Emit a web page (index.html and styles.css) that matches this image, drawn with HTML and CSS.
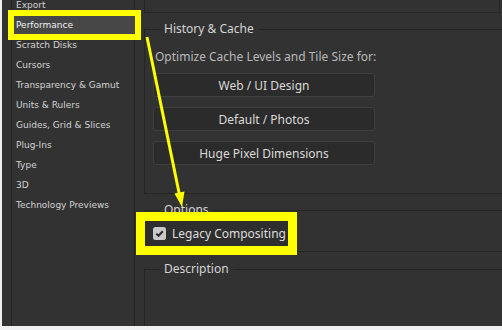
FILE: index.html
```html
<!DOCTYPE html>
<html lang="en">

<head>
    <meta charset="UTF-8">
    <meta name="viewport" content="width=device-width, initial-scale=1.0">
    <title>Preferences - Performance</title>
    <link rel="stylesheet" href="styles.css">
</head>

<body>
    <div class="window">
        <div class="sidebar">
            <ul class="nav">
                <li>Export</li>
                <li class="selected">Performance</li>
                <li>Scratch Disks</li>
                <li>Cursors</li>
                <li>Transparency &amp; Gamut</li>
                <li>Units &amp; Rulers</li>
                <li>Guides, Grid &amp; Slices</li>
                <li>Plug-Ins</li>
                <li>Type</li>
                <li>3D</li>
                <li>Technology Previews</li>
            </ul>
        </div>

        <div class="main">
            <div class="top-box"></div>

            <fieldset class="group group-cache">
                <legend>History &amp; Cache</legend>
                <p class="hint">Optimize Cache Levels and Tile Size for:</p>
                <button class="preset">Web / UI Design</button>
                <button class="preset">Default / Photos</button>
                <button class="preset">Huge Pixel Dimensions</button>
            </fieldset>

            <fieldset class="group group-options">
                <legend>Options</legend>
                <label class="check-row">
                    <span class="checkbox">
                        <svg width="13" height="13" viewBox="0 0 13 13">
                            <rect x="0" y="0" width="13" height="13" rx="2.5" fill="#c9c9c9" />
                            <path d="M3.3 6.6 L5.5 8.8 L9.8 4.2" fill="none" stroke="#2a2a2a" stroke-width="2" />
                        </svg>
                    </span>
                    Legacy Compositing
                </label>
            </fieldset>

            <fieldset class="group group-desc">
                <legend>Description</legend>
            </fieldset>
        </div>
    </div>

    <!-- annotation arrow -->
    <svg class="arrow" width="502" height="330" viewBox="0 0 502 330">
        <line x1="147" y1="37" x2="179.5" y2="195" stroke="#ffff00" stroke-width="3" />
        <polygon points="182,207 174.5,193.5 184.5,191.5" fill="#ffff00" />
    </svg>
</body>

</html>
```

FILE: styles.css
```css
body {
    margin: 0;
    background-color: #eef0f2;
    overflow: hidden;
    font-family: "Noto Sans", "Liberation Sans", sans-serif;
}

.window {
    margin-left: 2px;
    height: 326px;
    background-color: #323232;
    display: flex;
    overflow: hidden;
}

/* left list */
.sidebar {
    width: 133px;
    flex: none;
    box-sizing: border-box;
    padding-left: 9px;
    border-right: 1px solid #252525;
}

.nav {
    list-style: none;
    margin: -5px 0 0;
    padding: 0;
    height: calc(100% + 5px);
    border-left: 1px solid #252525;
    font-family: "DejaVu Sans", sans-serif;
    font-size: 9px;
    color: #d2d2d2;
}

.nav li {
    height: 20px;
    line-height: 20px;
    padding-left: 3px;
    margin-left: 1px;
    white-space: nowrap;
}

.nav li.selected {
    background-color: #474747;
    color: #f0f0f0;
    margin-right: -2px;
    outline: 6px solid #ffff00;
    outline-offset: -1px;
}

/* right panel */
.main {
    flex: 1;
    padding-left: 9px;
    min-width: 0;
}

.top-box {
    width: 356px;
    height: 13px;
    box-sizing: border-box;
    border: 1px solid #252525;
    border-top: none;
}

.group {
    border: 1px solid #252525;
    margin: 8px -40px 0 0;
    padding: 0;
    min-width: 0;
}

.group legend {
    margin-left: 15px;
    padding: 0 4px;
    font-size: 12px;
    line-height: 16px;
    color: #d4d4d4;
}

.group-cache {
    padding-bottom: 28px;
}

.hint {
    margin: 12px 0 8px 10px;
    font-size: 12px;
    line-height: 16px;
    color: #b9b9b9;
    white-space: nowrap;
}

.preset {
    display: block;
    width: 222px;
    height: 24px;
    margin: 0 0 10px 8px;
    background-color: #2b2b2b;
    border: 1px solid #3f3f3f;
    border-radius: 3px;
    font-family: inherit;
    font-size: 12px;
    color: #dadada;
    padding: 0;
}

.preset:last-child {
    margin-bottom: 0;
}

.group-options {
    margin-top: 8px;
    padding: 3px 0 5px;
}

.check-row {
    display: flex;
    align-items: center;
    gap: 6px;
    width: 143px;
    height: 25px;
    box-sizing: border-box;
    padding-left: 8px;
    background-color: #2e2e2e;
    outline: 9px solid #ffff00;
    font-size: 12px;
    color: #dcdcdc;
    white-space: nowrap;
}

.checkbox {
    display: flex;
}

.group-desc {
    margin-top: 9px;
    height: 80px;
}

.arrow {
    position: absolute;
    left: 0;
    top: 0;
    pointer-events: none;
}
```
